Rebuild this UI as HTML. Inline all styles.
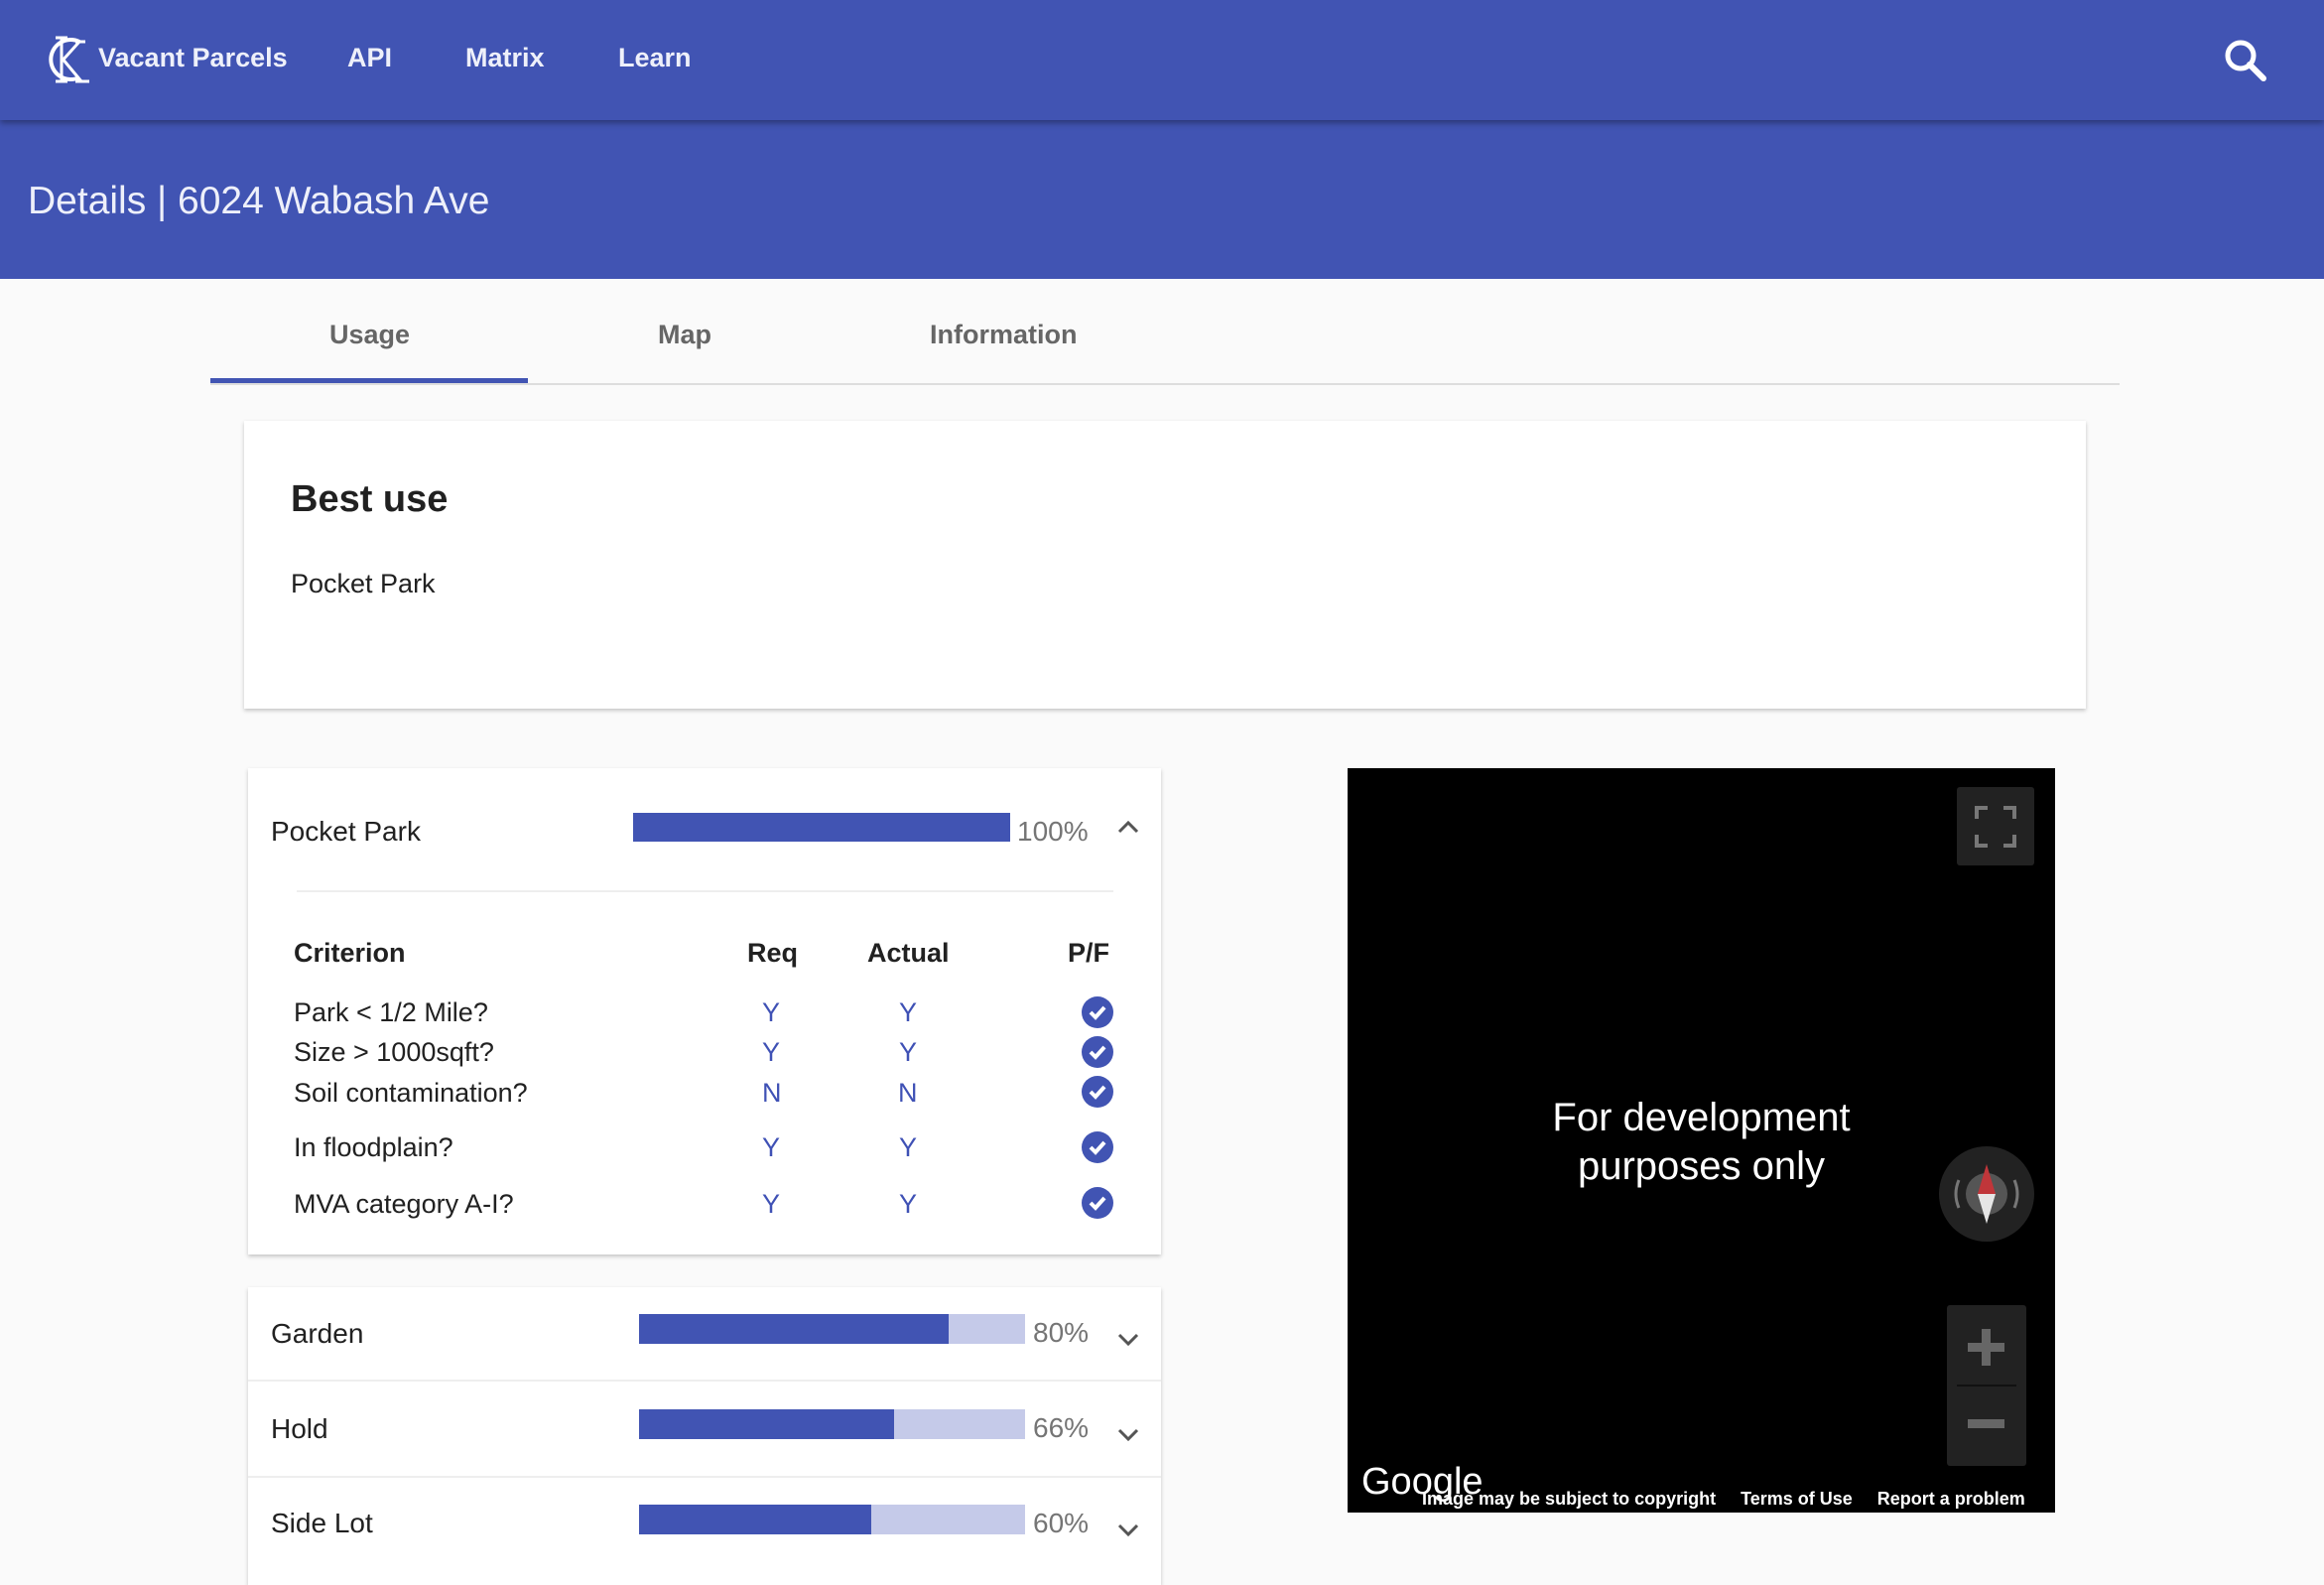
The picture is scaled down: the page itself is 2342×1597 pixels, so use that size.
<!DOCTYPE html>
<html><head><meta charset="utf-8"><style>
*{margin:0;padding:0;box-sizing:border-box}
body{width:2342px;height:1582px;overflow:hidden;background:#fafafa;font-family:"Liberation Sans",sans-serif;position:relative;color:#212121}
.a{position:absolute;white-space:nowrap}
.nav{left:0;top:0;width:2342px;height:121px;background:#4154b3;box-shadow:0 3px 6px rgba(0,0,0,.35);z-index:2}
.nv{color:#eef0fa;font-size:27px;font-weight:bold;top:43px}
.hdr{left:0;top:121px;width:2342px;height:160px;background:#4154b3}
.card{background:#fff;box-shadow:0 2px 4px rgba(0,0,0,.22)}
.tab{font-size:27px;color:#666;top:322px;font-weight:bold}
.t{font-size:28px;color:#212121}
.th{font-size:27px;font-weight:bold;top:944px}
.b{color:#3f51b5;font-size:27px}
.bar{position:absolute;background:#c5cae9;height:30px}
.bar i{position:absolute;left:0;top:0;bottom:0;background:#4154b3}
.pct{font-size:28px;color:#757575}
</style></head><body>
<div class="a nav">
<svg class="a" style="left:48px;top:36px" width="46" height="48" viewBox="0 0 46 48"><path d="M32 6 A20 20 0 1 0 32 42" fill="none" stroke="#fff" stroke-width="4"/><path d="M14 2V46M8 2H20M8 46H20M14 26L32 6M14 22L34 46M28 6H38M28 46H42" stroke="#fff" stroke-width="3" fill="none"/></svg>
<div class="a nv" style="left:99px">Vacant Parcels</div>
<div class="a nv" style="left:350px">API</div>
<div class="a nv" style="left:469px">Matrix</div>
<div class="a nv" style="left:623px">Learn</div>
<svg class="a" style="left:2240px;top:38px" width="46" height="46" viewBox="0 0 46 46"><circle cx="18" cy="18" r="13" fill="none" stroke="#fff" stroke-width="5"/><path d="M27 27L41 41" stroke="#fff" stroke-width="6" stroke-linecap="round"/></svg>
</div>
<div class="a hdr"><div class="a" style="left:28px;top:60px;font-size:39px;color:#eef0fa">Details | 6024 Wabash Ave</div></div>
<div class="a" style="left:212px;top:386px;width:1924px;height:2px;background:#ddd"></div>
<div class="a" style="left:212px;top:381px;width:320px;height:5px;background:#4154b3"></div>
<div class="a tab" style="left:332px">Usage</div>
<div class="a tab" style="left:663px">Map</div>
<div class="a tab" style="left:937px">Information</div>
<div class="a card" style="left:246px;top:424px;width:1856px;height:290px"></div>
<div class="a" style="left:293px;top:482px;font-size:38px;font-weight:bold">Best use</div>
<div class="a t" style="left:293px;top:573px;font-size:27px">Pocket Park</div>
<div class="a card" style="left:250px;top:774px;width:920px;height:490px"></div>
<div class="a t" style="left:273px;top:822px">Pocket Park</div>
<div class="bar" style="left:638px;top:819px;width:380px;height:29px"><i style="width:100%"></i></div>
<div class="a pct" style="left:1025px;top:822px">100%</div>
<svg class="a" style="left:1126px;top:825px" width="22" height="16"><path d="M2 13L11 4L20 13" stroke="#555" stroke-width="3" fill="none"/></svg>
<div class="a" style="left:299px;top:897px;width:823px;height:2px;background:#eee"></div>
<div class="a th" style="left:296px;top:945px">Criterion</div>
<div class="a th" style="left:753px;top:945px">Req</div>
<div class="a th" style="left:874px;top:945px">Actual</div>
<div class="a th" style="left:1076px;top:945px">P/F</div>
<div class="a t" style="left:296px;top:1005px;font-size:27px">Park &lt; 1/2 Mile?</div>
<div class="a t" style="left:296px;top:1045px;font-size:27px">Size &gt; 1000sqft?</div>
<div class="a t" style="left:296px;top:1086px;font-size:27px">Soil contamination?</div>
<div class="a t" style="left:296px;top:1141px;font-size:27px">In floodplain?</div>
<div class="a t" style="left:296px;top:1198px;font-size:27px">MVA category A-I?</div>
<div class="a b" style="left:768px;top:1005px">Y</div><div class="a b" style="left:906px;top:1005px">Y</div>
<div class="a b" style="left:768px;top:1045px">Y</div><div class="a b" style="left:906px;top:1045px">Y</div>
<div class="a b" style="left:768px;top:1086px">N</div><div class="a b" style="left:905px;top:1086px">N</div>
<div class="a b" style="left:768px;top:1141px">Y</div><div class="a b" style="left:906px;top:1141px">Y</div>
<div class="a b" style="left:768px;top:1198px">Y</div><div class="a b" style="left:906px;top:1198px">Y</div>
<svg width="0" height="0" style="position:absolute"><defs><symbol id="c" viewBox="0 0 32 32"><circle cx="16" cy="16" r="16" fill="#4154b3"/><path d="M9 16L14 21L23 11" stroke="#fff" stroke-width="4" fill="none"/></symbol></defs></svg>
<svg class="a" style="left:1090px;top:1004px" width="32" height="32"><use href="#c"/></svg>
<svg class="a" style="left:1090px;top:1044px" width="32" height="32"><use href="#c"/></svg>
<svg class="a" style="left:1090px;top:1084px" width="32" height="32"><use href="#c"/></svg>
<svg class="a" style="left:1090px;top:1140px" width="32" height="32"><use href="#c"/></svg>
<svg class="a" style="left:1090px;top:1196px" width="32" height="32"><use href="#c"/></svg>
<div class="a card" style="left:250px;top:1297px;width:920px;height:300px"></div>
<div class="a" style="left:250px;top:1390px;width:920px;height:2px;background:#eee"></div>
<div class="a" style="left:250px;top:1487px;width:920px;height:2px;background:#eee"></div>
<div class="a t" style="left:273px;top:1328px">Garden</div>
<div class="bar" style="left:644px;top:1324px;width:389px"><i style="width:312px"></i></div>
<div class="a pct" style="left:1041px;top:1327px">80%</div>
<div class="a t" style="left:273px;top:1424px">Hold</div>
<div class="bar" style="left:644px;top:1420px;width:389px"><i style="width:257px"></i></div>
<div class="a pct" style="left:1041px;top:1423px">66%</div>
<div class="a t" style="left:273px;top:1519px">Side Lot</div>
<div class="bar" style="left:644px;top:1516px;width:389px"><i style="width:234px"></i></div>
<div class="a pct" style="left:1041px;top:1519px">60%</div>
<svg class="a" style="left:1126px;top:1342px" width="22" height="16"><path d="M2 3L11 12L20 3" stroke="#555" stroke-width="3" fill="none"/></svg>
<svg class="a" style="left:1126px;top:1438px" width="22" height="16"><path d="M2 3L11 12L20 3" stroke="#555" stroke-width="3" fill="none"/></svg>
<svg class="a" style="left:1126px;top:1534px" width="22" height="16"><path d="M2 3L11 12L20 3" stroke="#555" stroke-width="3" fill="none"/></svg>
<div class="a" style="left:1358px;top:774px;width:713px;height:750px;background:#000;overflow:hidden">
<div class="a" style="left:0;width:713px;top:328px;text-align:center;color:#fff;font-size:40px;line-height:49px;white-space:normal">For development<br>purposes only</div>
<div class="a" style="left:614px;top:19px;width:78px;height:79px;background:#222;border-radius:3px"></div>
<svg class="a" style="left:631px;top:37px" width="44" height="44"><path d="M3 14V3H14M30 3H41V14M41 30V41H30M14 41H3V30" stroke="#777" stroke-width="4" fill="none"/></svg>
<svg class="a" style="left:596px;top:381px" width="96" height="96" viewBox="0 0 96 96"><circle cx="48" cy="48" r="48" fill="#222"/><circle cx="48" cy="48" r="21" fill="#555"/><path d="M48 18L57 48H39Z" fill="#c0363a"/><path d="M48 78L57 48H39Z" fill="#e6e6e6"/><path d="M20 34Q14 48 20 62M76 34Q82 48 76 62" stroke="#777" stroke-width="3" fill="none"/></svg>
<div class="a" style="left:604px;top:541px;width:80px;height:162px;background:#222;border-radius:3px"></div>
<div class="a" style="left:614px;top:621px;width:60px;height:2px;background:#111"></div>
<div class="a" style="left:625px;top:579px;width:37px;height:9px;background:#666"></div>
<div class="a" style="left:639px;top:565px;width:9px;height:37px;background:#666"></div>
<div class="a" style="left:625px;top:656px;width:37px;height:9px;background:#666"></div>
<div class="a" style="left:14px;top:698px;color:#fff;font-size:38px">Google</div>
<div class="a" style="left:75px;top:726px;color:#fff;font-size:18px;font-weight:bold">Image may be subject to copyright&nbsp;&nbsp;&nbsp;&nbsp;&nbsp;Terms of Use&nbsp;&nbsp;&nbsp;&nbsp;&nbsp;Report a problem</div>
</div>
</body></html>
